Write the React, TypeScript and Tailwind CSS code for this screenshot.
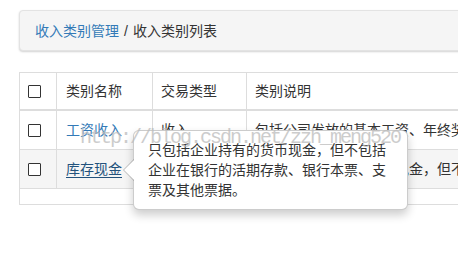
import React from "react";

const font = { fontFamily: '"Liberation Sans", "Noto Sans CJK SC", sans-serif' };

function Box() {
  return <div className="w-[13px] h-[13px] border border-[#333] bg-white rounded-[1px]" />;
}

export default function App() {
  return (
    <div
      className="relative w-[458px] h-[254px] overflow-hidden bg-white text-[14px] leading-[20px] text-[#333]"
      style={font}
    >
      <div className="pl-[19px] pt-[10px]">
        <div className="w-[700px] h-[41px] flex items-center px-[15px] bg-[#f5f5f5] border border-[#e3e3e3] rounded-[4px] shadow-[0_1px_2px_rgba(0,0,0,0.18)]">
          <span className="text-[#337ab7]">收入类别管理</span>
          <span className="px-[5px] text-[#333]">/</span>
          <span>收入类别列表</span>
        </div>

        <div className="mt-[21px] w-[800px] border border-[#ddd]">
          <div className="flex h-[38px] border-b-2 border-[#ddd]">
            <div className="w-[37px] border-r border-[#ddd] flex items-center pl-[8px]">
              <Box />
            </div>
            <div className="w-[96px] border-r border-[#ddd] flex items-center pl-[9px]">类别名称</div>
            <div className="w-[94px] border-r border-[#ddd] flex items-center pl-[8px]">交易类型</div>
            <div className="flex-1 flex items-center pl-[8px]">类别说明</div>
          </div>
          <div className="flex h-[39px] border-b border-[#ddd]">
            <div className="w-[37px] border-r border-[#ddd] flex items-center pl-[8px]">
              <Box />
            </div>
            <div className="w-[96px] border-r border-[#ddd] flex items-center pl-[9px] text-[#337ab7]">工资收入</div>
            <div className="w-[94px] border-r border-[#ddd] flex items-center pl-[8px]">收入</div>
            <div className="flex-1 flex items-center pl-[8px] whitespace-nowrap">包括公司发放的基本工资、年终奖金和各类补贴。</div>
          </div>
          <div className="flex h-[39px] border-b border-[#ddd] bg-[#f5f5f5]">
            <div className="w-[37px] border-r border-[#ddd] flex items-center pl-[8px]">
              <Box />
            </div>
            <div className="w-[96px] border-r border-[#ddd] flex items-center pl-[9px]">
              <span className="text-[#23527c] underline underline-offset-[3px]">库存现金</span>
            </div>
            <div className="w-[94px] border-r border-[#ddd] flex items-center pl-[8px]">收入</div>
            <div className="flex-1 flex items-center pl-[8px] whitespace-nowrap">只包括企业持有的货币现金，但不包括企业在银行的活期存款。</div>
          </div>
          <div className="h-[15px]" />
        </div>
      </div>

      {/* popover */}
      <div className="absolute left-[133px] top-[130px] w-[275px] bg-white border border-[rgba(0,0,0,0.2)] rounded-[6px] shadow-[0_5px_10px_rgba(0,0,0,0.2)] px-[14px] py-[9px]">
        <div className="absolute left-[-11px] top-1/2 -mt-[11px] w-0 h-0 border-y-[11px] border-y-transparent border-r-[11px] border-r-[rgba(0,0,0,0.25)]" />
        <div className="absolute left-[-10px] top-1/2 -mt-[10px] w-0 h-0 border-y-[10px] border-y-transparent border-r-[10px] border-r-white" />
        <div>
          只包括企业持有的货币现金，但不包括
          <br />
          企业在银行的活期存款、银行本票、支
          <br />
          票及其他票据。
        </div>
      </div>

      {/* watermark */}
      <div
        className="absolute left-[80px] top-[128px] text-[20px] leading-[20px] tracking-[-2px] text-[#bcbcbc] opacity-75 whitespace-nowrap pointer-events-none"
        style={{ fontFamily: '"Liberation Mono", monospace' }}
      >
        http://blog.csdn.net/zzh_meng520
      </div>
    </div>
  );
}
